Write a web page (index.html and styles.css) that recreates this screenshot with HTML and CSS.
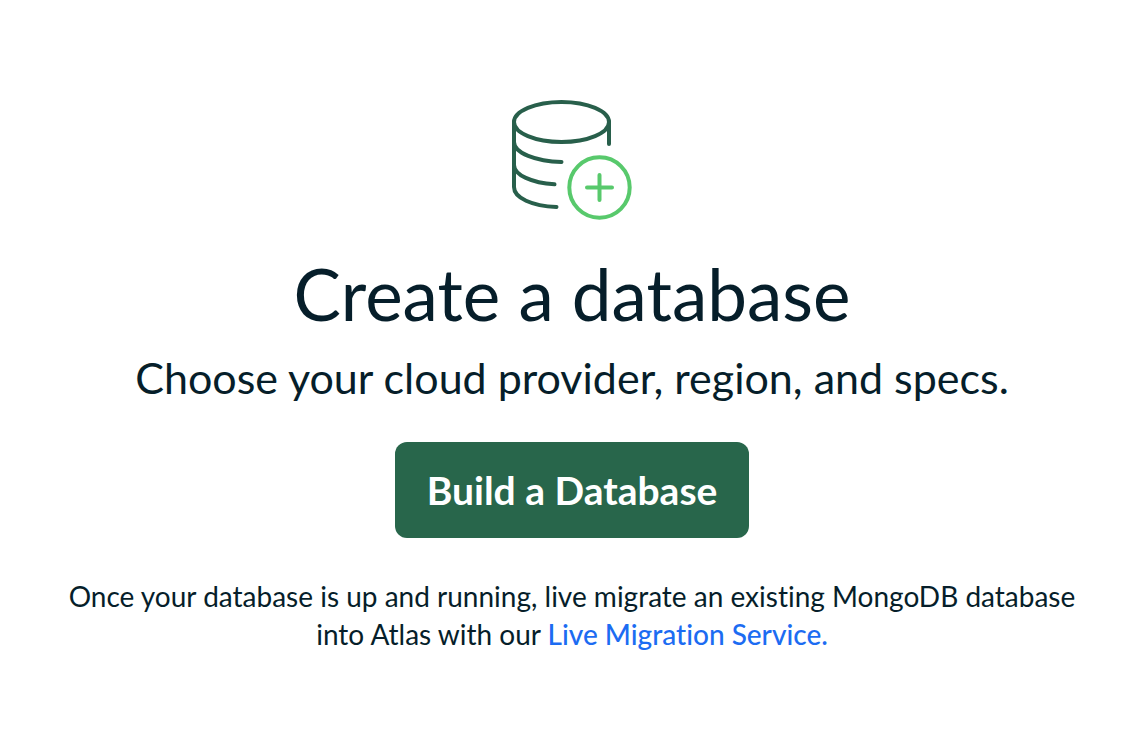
FILE: index.html
```
<!DOCTYPE html>
<html lang="en">
<head>
<meta charset="utf-8">
<meta name="viewport" content="width=device-width, initial-scale=1">
<title>Create a database</title>
<link rel="stylesheet" href="styles.css">
</head>
<body>
<main class="empty-state">
  <svg class="icon" viewBox="0 0 124 124" fill="none" stroke-width="4" stroke-linecap="round" aria-hidden="true">
    <g stroke="#285f4b">
      <ellipse cx="51.500" cy="24" rx="47.500" ry="20"/>
      <path d="M4 24V89C4 100 22 108 46.500 109"/>
      <path d="M99 24V46"/>
      <path d="M4 44C4 55 26 63.500 51.500 64"/>
      <path d="M4 67C4 77 22 85 44.500 86.300"/>
    </g>
    <g stroke="#58c96c">
      <circle cx="89.500" cy="89.500" r="30.200"/>
      <path d="M89.500 77V102M77 89.500H102"/>
    </g>
  </svg>
  <h1 class="title">Create a database</h1>
  <p class="subtitle">Choose your cloud provider, region, and specs.</p>
  <button class="build" type="button">Build a Database</button>
  <p class="note">Once your database is up and running, live migrate an existing MongoDB database into Atlas with our <a class="link" href="#">Live Migration Service.</a></p>
</main>
</body>
</html>
```
FILE: styles.css
```
body {
  margin: 0;
  background: #fff;
  color: #061e2a;
  font-family: Lato, sans-serif;
  font-variant-ligatures: none;
}
.empty-state {
  display: flex;
  flex-direction: column;
  align-items: center;
  padding: 98px 44px 88px 62px;
  text-align: center;
}
.icon {
  width: 124px;
  height: 124px;
}
.title {
  margin: 32px 0 0;
  font-size: 71px;
  font-weight: 400;
  line-height: 80px;
}
.subtitle {
  margin: 18px 0 0;
  font-size: 43px;
  line-height: 52px;
}
.build {
  margin: 38px 0 0;
  padding: 24px 32px;
  border: 0;
  border-radius: 12px;
  background: #28664b;
  color: #fff;
  font: 700 39px/48px Lato, sans-serif;
}
.note {
  margin: 39px 0 0;
  font-size: 28px;
  line-height: 38px;
}
.link {
  color: #1c6cf2;
  font-weight: 500;
  text-decoration: none;
}
```
